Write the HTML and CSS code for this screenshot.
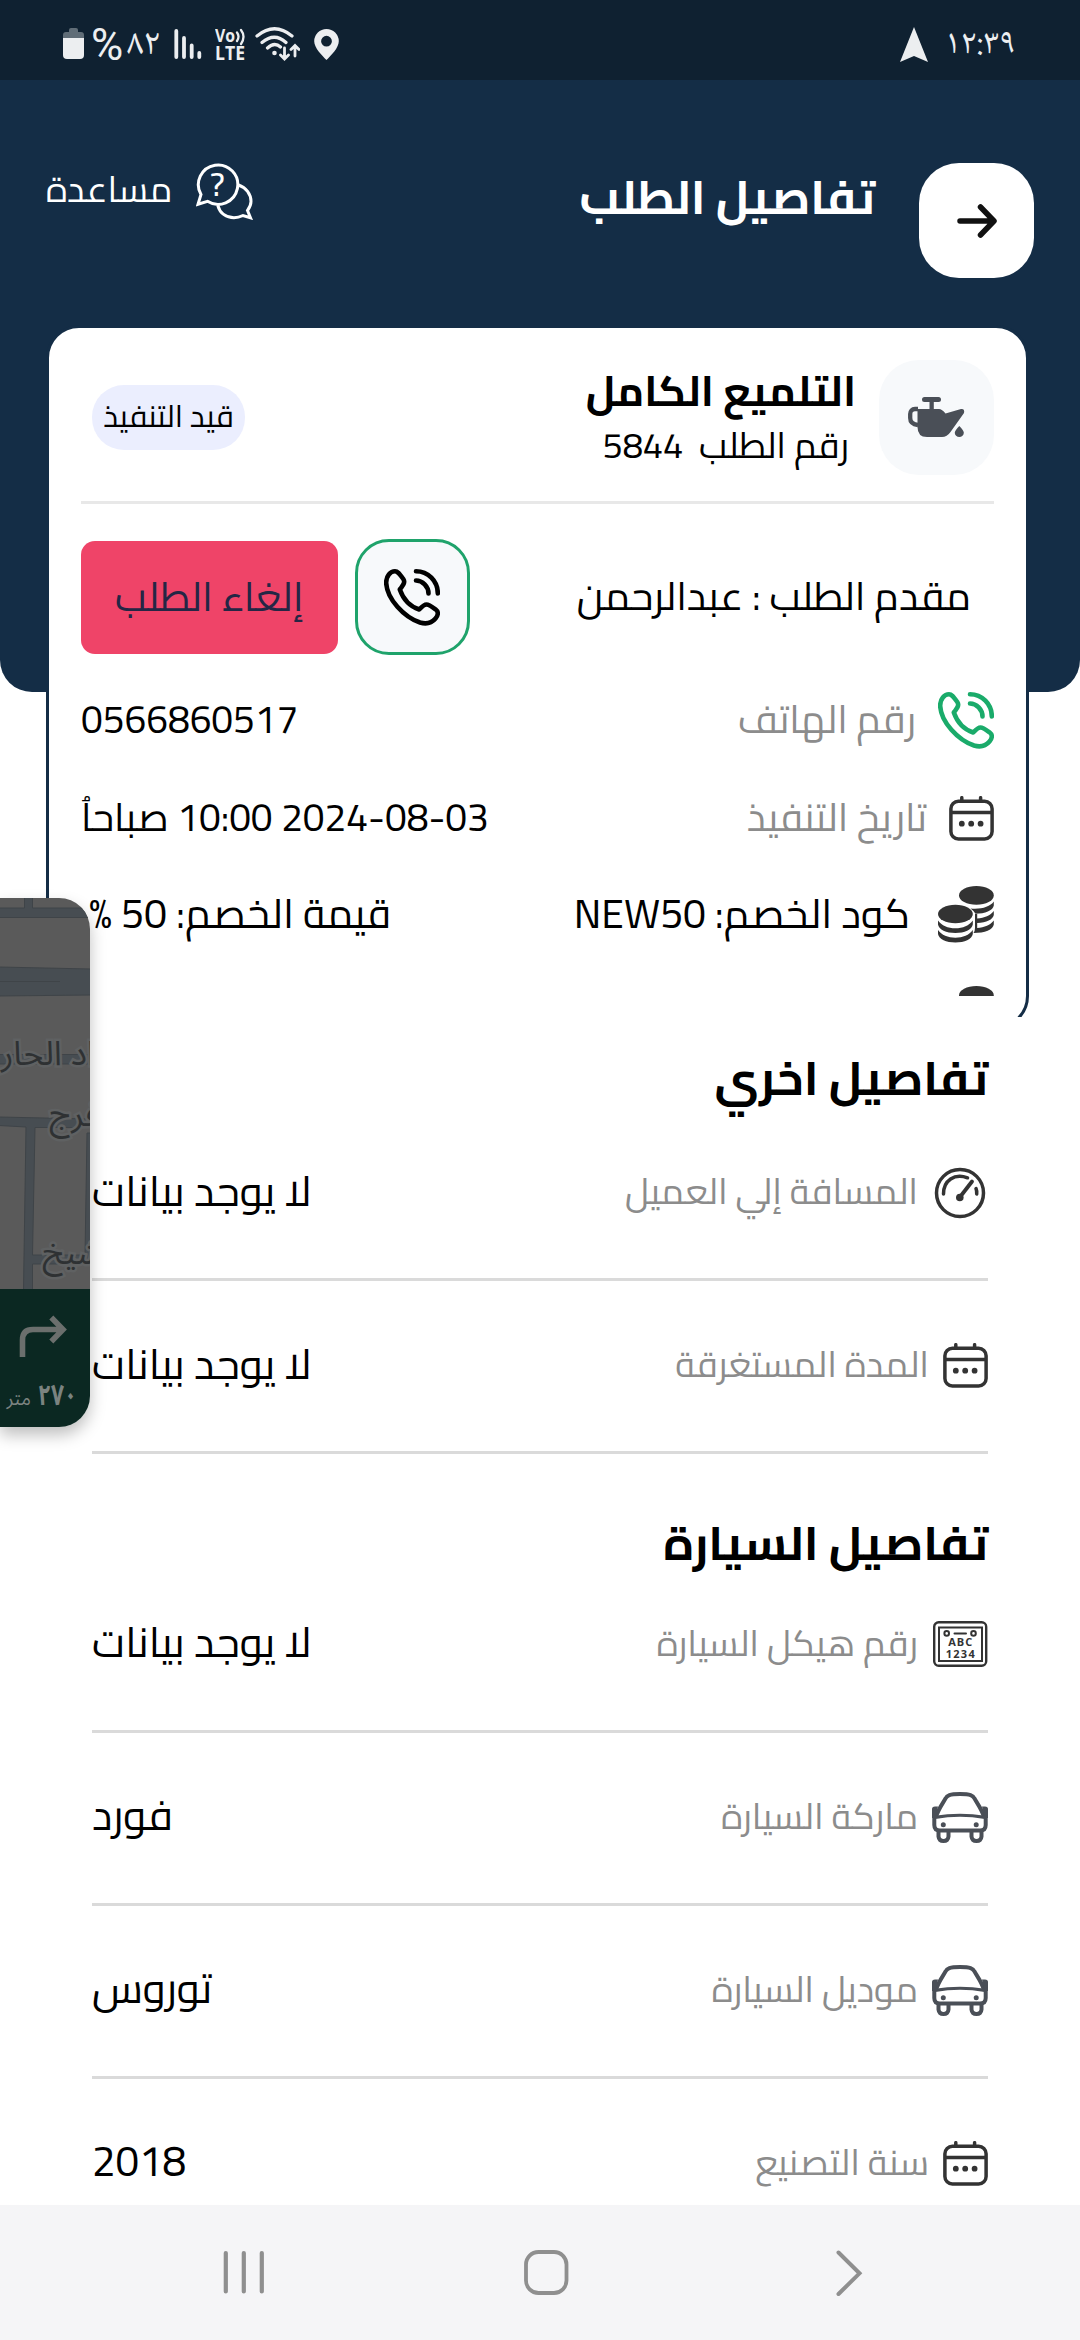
FILE: index.html
```
<!DOCTYPE html>
<html lang="ar" dir="rtl">
<head>
<meta charset="utf-8">
<title>تفاصيل الطلب</title>
<link rel="stylesheet" href="styles.css">
</head>
<body>
<svg class="sprite" aria-hidden="true">
  <symbol id="phone" viewBox="0 0 56 57">
    <g fill="none" stroke="currentColor" stroke-width="4.600" stroke-linecap="round" stroke-linejoin="round">
      <path d="M11 2.3C13.5 2.3 15 4 19.3 10C21 12.5 20.5 14.5 15.8 20.5C19 29.500 26 37.500 35.200 40.500C38 37.500 40.500 35.500 42.500 35.500C45 35.500 47 37 51.800 40.500C54.500 42.500 54.500 46 51.500 49.500C47 54.800 41 55 36 53.500C20 48 3 30 2.200 14C2 7 6.500 2.300 11 2.300Z"/>
      <path d="M32 2.300C44 2.300 53.800 12 53.800 24.500M32 11.500C38.500 11.500 44.500 17.500 44.500 24.500"/>
    </g>
  </symbol>
  <symbol id="calendar" viewBox="0 0 45 45">
    <g fill="none" stroke="currentColor" stroke-width="3.500">
      <rect x="1.900" y="5.200" width="41.200" height="37.800" rx="7.500"/>
      <path d="M2 16.500H43"/>
      <path d="M12.800 1.700V5M31.600 1.700V5" stroke-linecap="round"/>
    </g>
    <g fill="currentColor"><circle cx="12.800" cy="27.700" r="2.900"/><circle cx="22.200" cy="27.700" r="2.900"/><circle cx="31.600" cy="27.700" r="2.900"/></g>
  </symbol>
  <symbol id="coins" viewBox="0 0 56 57">
    <g fill="currentColor">
      <ellipse cx="38.400" cy="9.400" rx="17.400" ry="9.300"/>
      <ellipse cx="17.400" cy="28" rx="17.400" ry="9.300"/>
      <path d="M0 34.500C3.500 39.500 10 42.300 17.400 42.300S31.300 39.500 34.800 34.500V38.500C34 43.500 26.500 47 17.400 47S.8 43.500 0 38.500Z"/>
      <path d="M0 44C3.500 49 10 51.700 17.400 51.700S31.300 49 34.800 44V48C34 53 26.500 56.500 17.400 56.500S.8 53 0 48Z"/>
      <path d="M32.500 22.500C43 23.500 52 21 55.800 15.500V19.500C55 24.500 47 27.700 37.500 27.800Q35.500 24.500 32.500 22.500Z"/>
      <path d="M37 28H39.200V32.500C46.500 32 52.500 29.500 55.800 25V29C55 33.500 48.500 36.500 39.200 37V42C46.500 41.500 52.500 39 55.800 34.500V38.500C55 43.500 47 47 35.500 47Q37 45 37 42Z"/>
    </g>
  </symbol>
  <symbol id="car" viewBox="0 0 56 51">
    <g fill="none" stroke="currentColor" stroke-width="4" stroke-linejoin="round">
      <path d="M4 25C6 17.500 11 11 13.500 6.500C15 3.300 17.500 2 28 2S41 3.300 42.500 6.500C45 11 50 17.500 52 25"/>
      <path d="M2.300 24V33C2.300 36.500 4.500 38.500 8 38.500H48C51.500 38.500 53.700 36.500 53.700 33V24"/>
      <path d="M3 25.300Q28 21.200 53 25.300" stroke-width="3.200"/>
      <path d="M6.500 39V44.500Q7 49 11.500 49T16.500 44.500V39M39.500 39V44.500Q40 49 44.500 49T49.500 44.500V39"/>
    </g>
    <g fill="currentColor"><path d="M0 26V17Q0 14.500 3 14.500H6L3.500 26ZM56 26V17Q56 14.500 53 14.500H50L52.500 26Z"/><circle cx="11.300" cy="32.800" r="2.500"/><circle cx="44.200" cy="32.800" r="2.500"/></g>
  </symbol>
</svg>

<div class="screen">
  <div class="status">
    <div class="status-side status-clock">
      <span class="clock">١٢:٣٩</span>
      <svg width="28" height="35" viewBox="0 0 28 35"><path d="M14 0L28 35L14 29L0 35Z" fill="#eceef0"/></svg>
    </div>
    <div class="status-side status-icons" dir="ltr">
      <svg class="battery" width="21" height="32" viewBox="0 0 21 32"><path d="M6 3Q6 1 8 1H13Q15 1 15 3V5H18Q21 5 21 8V14H0V8Q0 5 3 5H6Z" fill="#606d77"/><path d="M0 11H21V28Q21 32 17 32H4Q0 32 0 28Z" fill="#eceef0"/></svg>
      <span class="percent">%</span><span class="charge">٨٢</span>
      <svg class="signal" width="28" height="30" viewBox="0 0 28 30"><g stroke="#eceef0" stroke-width="3.800" stroke-linecap="round"><path d="M2.300 2V28M10 9V28M17.700 16.500V28M25.300 24V28"/></g></svg>
      <svg class="volte" width="31" height="33" viewBox="0 0 31 33" font-family="'Open Sans',sans-serif" font-weight="700" fill="#eceef0"><text x="0" y="14" font-size="17" textLength="20" lengthAdjust="spacingAndGlyphs">Vo</text><text x="0" y="31.500" font-size="19" textLength="30" lengthAdjust="spacingAndGlyphs">LTE</text><path d="M22 4.500Q25 8.500 22 13M26 2Q31 8.500 26 16" fill="none" stroke="#eceef0" stroke-width="2.300" stroke-linecap="round"/></svg>
      <svg class="wifi" width="45" height="34" viewBox="0 0 45 34"><g fill="none" stroke="#eceef0" stroke-width="3.200" stroke-linecap="round"><path d="M2 9Q19.500-5.500 37 9M7 15.500Q19.500 5 31 15.500M12.500 21Q19.500 14.500 25.500 20"/><path d="M29.500 21V31M25.500 28L29.500 32L33.500 28M40 29V20M36 22.500L40 18.500L44 22.500" stroke-width="2.800"/></g><circle cx="19.500" cy="26" r="2.300" fill="#eceef0"/></svg>
      <svg class="pin" width="25" height="31" viewBox="0 0 25 31"><path fill-rule="evenodd" d="M12.500 0A12.300 12.300 0 0 1 24.800 12.300C24.800 19 17 26.500 12.500 31C8 26.500.2 19 .2 12.300A12.300 12.300 0 0 1 12.500 0ZM12.500 6.800A5.400 5.400 0 1 0 12.500 17.600A5.400 5.400 0 1 0 12.500 6.800Z" fill="#eceef0"/></svg>
    </div>
  </div>

  <main class="main">
    <header class="header">
      <div class="back"><svg width="40" height="36" viewBox="0 0 40 36"><path d="M3 18H36M23.500 4L37 18L23.500 32" fill="none" stroke="#111" stroke-width="5.500" stroke-linecap="round" stroke-linejoin="round"/></svg></div>
      <h1 class="page-title">تفاصيل الطلب</h1>
      <div class="help">
        <svg width="57" height="57" viewBox="0 0 57 57"><g fill="none" stroke="#fff" stroke-width="3"><path d="M5 31.500A19.700 19.700 0 1 1 11.500 38.300L2 41.300Z"/><path d="M42.500 22C50 24.500 55 31 55 38.500C55 42 53 45.500 51.500 47.500L54.500 54.800L47 52.500C44 54 41 54.800 38 54.800C30.500 54.800 24 50.500 21.800 42.500"/></g><text x="21.500" y="32.500" text-anchor="middle" font-family="Cairo,sans-serif" font-size="33" font-weight="500" fill="#fff">?</text></svg>
        <span class="help-text">مساعدة</span>
      </div>
    </header>

    <div class="card-clip">
      <section class="card">
        <div class="card-body">
          <div class="card-head">
            <div class="service-icon"><svg width="57" height="41" viewBox="0 0 57 41"><g fill="#4a4f57"><rect x="14" y="0" width="19" height="5" rx="2.500"/><path d="M21.500 3H25.800V13H21.500Z"/><path d="M9.500 12H31Q34 12 37.500 16.500L53 12Q57 11.500 56 16L42.500 35Q39 40 34 40H19Q9.500 40 9.500 30Z"/><path d="M51.300 29Q55.800 33.500 55.800 35.800A4.500 4.300 0 0 1 46.800 35.800Q46.800 33.500 51.300 29Z"/></g><path d="M10 12L7 12C4 12 2.200 14 2.200 17V21C2.200 25 5 27.500 10 28" fill="none" stroke="#4a4f57" stroke-width="4.300"/></svg></div>
            <div class="service-text">
              <h2 class="service-name">التلميع الكامل</h2>
              <p class="order-number">رقم الطلب&nbsp; 5844</p>
            </div>
            <span class="badge">قيد التنفيذ</span>
          </div>
          <div class="actions">
            <span class="requester">مقدم الطلب : عبدالرحمن</span>
            <div class="call"><svg width="56" height="57"><use href="#phone"/></svg></div>
            <div class="cancel">إلغاء الطلب</div>
          </div>
          <div class="info info-phone">
            <svg class="green" width="56" height="57"><use href="#phone"/></svg>
            <span class="info-label">رقم الهاتف</span>
            <span class="info-value">0566860517</span>
          </div>
          <div class="info info-date">
            <svg width="45" height="45"><use href="#calendar"/></svg>
            <span class="info-label">تاريخ التنفيذ</span>
            <span class="info-value">2024-08-03 10:00 صباحاُ</span>
          </div>
          <div class="info info-coupon">
            <svg width="56" height="57"><use href="#coins"/></svg>
            <span class="coupon-code">كود الخصم: NEW50</span>
            <span class="coupon-value">قيمة الخصم: 50 %</span>
          </div>
          <div class="info info-next">
            <svg width="56" height="57"><use href="#coins"/></svg>
          </div>
        </div>
      </section>
    </div>

    <section class="section other">
      <h2 class="section-title">تفاصيل اخري</h2>
      <div class="row">
        <svg width="56" height="52" viewBox="0 0 56 52"><g fill="none" stroke="currentColor" stroke-width="3.500" stroke-linecap="round"><circle cx="28" cy="26" r="23.500"/><path d="M11.500 27C11.500 13.500 22.500 6 35.500 10.800M44 21.500Q45 24 44.700 27"/><path d="M28 30L40 14.500" stroke-width="3.800"/></g><circle cx="27.800" cy="30.500" r="3.800" fill="currentColor"/></svg>
        <span class="label">المسافة إلي العميل</span><span class="value">لا يوجد بيانات</span>
      </div>
      <div class="row">
        <svg width="45" height="45"><use href="#calendar"/></svg>
        <span class="label">المدة المستغرقة</span><span class="value">لا يوجد بيانات</span>
      </div>
    </section>

    <section class="section vehicle">
      <h2 class="section-title">تفاصيل السيارة</h2>
      <div class="row">
        <svg width="56" height="46" viewBox="0 0 56 46"><g fill="none" stroke="currentColor"><rect x="2.200" y="1.300" width="52" height="43.500" rx="4.500" stroke-width="2.400"/><rect x="7" y="6.500" width="43" height="33.500" stroke-width="2"/><circle cx="14.700" cy="12.400" r="2.300" stroke-width="2"/><circle cx="41.500" cy="12.400" r="2.300" stroke-width="2"/><path d="M22.500 12.400H34" stroke-width="2" stroke-linecap="round"/></g><g fill="currentColor" font-family="'Open Sans',sans-serif" font-weight="700" font-size="11" text-anchor="middle" direction="ltr"><text x="28.200" y="25.300" textLength="24">ABC</text><text x="28.200" y="36.700" textLength="29">1234</text></g></svg>
        <span class="label">رقم هيكل السيارة</span><span class="value">لا يوجد بيانات</span>
      </div>
      <div class="row">
        <svg class="slate" width="56" height="51"><use href="#car"/></svg>
        <span class="label">ماركة السيارة</span><span class="value">فورد</span>
      </div>
      <div class="row">
        <svg class="slate" width="56" height="51"><use href="#car"/></svg>
        <span class="label">موديل السيارة</span><span class="value">توروس</span>
      </div>
      <div class="row">
        <svg width="45" height="45"><use href="#calendar"/></svg>
        <span class="label">سنة التصنيع</span><span class="value">2018</span>
      </div>
    </section>
  </main>

  <nav class="nav" dir="ltr">
    <svg width="42" height="45" viewBox="0 0 42 45"><path d="M2.800 3V41.500M20.800 3V41.500M38.800 3V41.500" stroke="#8f8f8f" stroke-width="4.200" stroke-linecap="round"/></svg>
    <svg class="home" width="45" height="45" viewBox="0 0 45 45"><rect x="2" y="2" width="40.500" height="41" rx="12.500" fill="none" stroke="#8f8f8f" stroke-width="3.800"/></svg>
    <svg class="chevron" width="27" height="47" viewBox="0 0 27 47"><path d="M2.500 2.500L23.500 23.300L2.500 44" fill="none" stroke="#8f8f8f" stroke-width="4" stroke-linecap="round"/></svg>
  </nav>

  <div class="pip">
    <svg width="90" height="529" viewBox="0 0 90 529">
      <rect width="90" height="391" fill="#5a5a5a"/>
      <g fill="#474d52" stroke="#3f4448" stroke-width="1">
        <path d="M24.500-1V10H-1V19.500H91V10H32.500V-1Z"/>
        <path d="M-1 69L91 71V97L-1 98Z"/><path d="M-1 83.500H60" />
        <path d="M-1 156.500H91V166H-1Z"/>
        <path d="M-1 219L91 221V229.500H35L32.500 357H85L87 235H91V366H32.500V392H23.500L26 229L-1 227.500Z"/>
      </g>
      <g class="map-label"><text x="95" y="167">اد الحار</text><text x="100" y="228">فرج</text><text x="104" y="366">شيخ</text></g>
      <rect y="391" width="90" height="138" fill="#0b2822"/>
      <path d="M22.500 459V442Q22.500 431.500 33 431.500H62M51.300 419.500L63 431.500L51.300 443.500" fill="none" stroke="#6b6f6d" stroke-width="5.600"/>
      <text class="dist" x="77" y="507" textLength="39" lengthAdjust="spacingAndGlyphs">٢٧٠</text><text class="unit" x="31" y="507">متر</text>
    </svg>
  </div>
</div>
</body>
</html>
```
FILE: styles.css
```
* { box-sizing: border-box; }
body { margin: 0; background: #fff; font-family: Cairo, "Noto Sans", sans-serif; color: #000; }
h1, h2, p { margin: 0; }
svg { display: block; flex: none; }
.sprite { position: absolute; width: 0; height: 0; }

.screen { position: relative; width: 1080px; height: 2340px; overflow: hidden; display: flex; flex-direction: column; }

.status { height: 80px; flex: none; background: #0f2131; display: flex; justify-content: space-between; align-items: flex-start; padding: 0 65px 0 63px; color: #eceef0; }
.status-side { display: flex; align-items: flex-start; padding-top: 27px; }
.clock { font: 35px/38px "Noto Naskh Arabic", sans-serif; }
.status-clock { gap: 17px; }
.status-icons { line-height: 34px; white-space: nowrap; }
.battery { margin-right: 7px; }
.percent { font: 44px/34px Roboto, sans-serif; width: 36px; padding-top: 1px; }
.charge { font: 37px/38px "Noto Naskh Arabic", sans-serif; width: 34px; }
.signal { margin: 2px 13px 0 13px; }
.volte { margin: 1px 9px 0 0; }
.pin { margin: 2px 0 0 14px; }

.main { height: 2125px; flex: none; overflow: hidden; }
.header { height: 612px; background: #142d46; border-radius: 0 0 32px 32px; display: flex; align-items: flex-start; padding: 83px 46px 0; color: #fff; }
.back { width: 115px; height: 115px; border-radius: 40px; background: #fff; display: flex; align-items: center; justify-content: center; }
.page-title { font-size: 47.3px; font-weight: 700; line-height: 40px; margin: 14px 44px 0 0; white-space: nowrap; }
.help { display: flex; gap: 24px; margin-right: auto; }
.help-text { font-size: 36px; line-height: 40px; margin-top: 6px; }

.card-clip { height: 692px; margin-top: -367px; overflow: hidden; padding: 0 51px 0 46px; position: relative; }
.card { height: 704px; border: 3px solid #142d46; border-radius: 33px; background: #fff; padding: 32px 32px 0; }
.card-body { height: 636px; overflow: hidden; }
.card-head { display: flex; align-items: flex-start; height: 144px; border-bottom: 3px solid #e8e8e8; }
.service-icon { width: 115px; height: 115px; border-radius: 40px; background: #f7f9fb; display: flex; align-items: center; justify-content: center; }
.service-text { padding: 3px 23px 0 0; }
.service-name { font-size: 41.9px; font-weight: 700; line-height: 55px; white-space: nowrap; }
.order-number { font-size: 36px; line-height: 55px; padding-right: 7px; white-space: nowrap; }
.badge { margin: 25px auto 0 11px; width: 153px; height: 65px; border-radius: 32px; background: #ebeefe; font-size: 30.7px; line-height: 63px; text-align: center; }
.actions { display: flex; align-items: center; height: 116px; margin-top: 35px; }
.requester { font-size: 39.7px; line-height: 60px; padding: 0 23px 2px 0; white-space: nowrap; }
.call { width: 115px; height: 116px; border: 3px solid #1fa36b; border-radius: 34px; background: #f7f9fb; display: flex; align-items: center; justify-content: center; margin: 0 auto 0 17px; }
.cancel { width: 256.500px; height: 113px; border-radius: 14px; background: #ef4468; color: #252645; font-size: 40.5px; line-height: 110px; text-align: center; }

.info { display: flex; align-items: center; color: #333; white-space: nowrap; line-height: 50px; }
.info-phone { height: 57px; margin-top: 37px; }
.info-date { height: 45px; margin-top: 47px; }
.info-coupon { height: 57px; margin-top: 45px; }
.info-next { height: 57px; margin-top: 43px; }
.green { color: #1aab6a; }
.info-label { font-size: 39px; color: #8c8c8c; margin: 0 22px 4px 0; }
.info-value { font-size: 38.8px; color: #000; margin: 0 auto 4px 0; }
.coupon-code { font-size: 40.8px; color: #000; margin: 0 28px 3px 0; }
.coupon-value { font-size: 41px; color: #000; margin: 0 auto 3px 8px; }

.section { padding: 0 92px; }
.other { padding-top: 44px; }
.vehicle { padding-top: 71.500px; }
.section-title { font-size: 47.3px; font-weight: 700; line-height: 34px; white-space: nowrap; }
.other .section-title { margin-bottom: 13px; }
.row { height: 173px; border-bottom: 3px solid #dadada; display: flex; align-items: center; padding-bottom: 4px; color: #333; line-height: 60px; white-space: nowrap; }
.row svg { margin-top: 3px; }
.slate { color: #4a4f57; }
.label { font-size: 36px; color: #8c8c8c; margin: 0 14px 0 0; }
.value { font-size: 42px; color: #000; margin: 0 auto 1px 0; }

.nav { height: 135px; flex: none; background: #f5f5f7; display: flex; align-items: flex-start; padding: 45px 0 0 223px; }
.home { margin-left: 259px; }
.chevron { margin-left: 267px; }

.pip { position: absolute; left: 0; top: 898px; width: 90px; height: 529px; border-radius: 0 31px 31px 0; overflow: hidden; box-shadow: 0 8px 16px rgba(0,0,0,.25); direction: ltr; }
.map-label { font: 34px "Noto Sans Arabic", sans-serif; fill: #2e3133; stroke: #5f6162; stroke-width: 5px; paint-order: stroke; text-anchor: end; }
.dist { font: 700 29px "Noto Sans Arabic", sans-serif; fill: #7b8380; text-anchor: end; }
.unit { font: 19px "Noto Sans Arabic", sans-serif; fill: #7b8380; text-anchor: end; }
```
